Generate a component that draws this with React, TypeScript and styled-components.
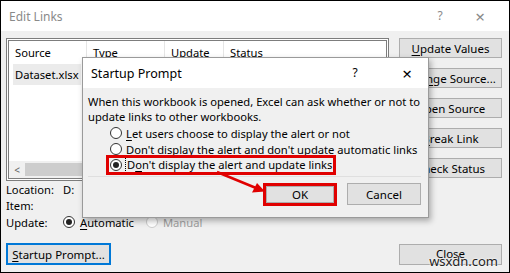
import React from "react";
import styled, { createGlobalStyle, css } from "styled-components";

const FONT = `"Noto Sans", "Open Sans", sans-serif`;

const Global = createGlobalStyle`
  html, body { margin: 0; padding: 0; background: #fff; }
  body { font-family: ${FONT}; font-size: 11.2px; color: #000; }
  * { box-sizing: border-box; }
`;

const Window = styled.div`
  position: relative;
  width: 510px;
  height: 273px;
  border: 1px solid #000;
  background: #f0f0f0;
  display: flex;
  flex-direction: column;
  overflow: hidden;
`;

const TitleBar = styled.div<{ $active?: boolean }>`
  height: 30px;
  flex: none;
  background: #fff;
  display: flex;
  align-items: center;
  padding-left: 8px;
  font-size: ${(p) => (p.$active ? 12.5 : 12)}px;
  color: ${(p) => (p.$active ? "#000" : "#8a8a8a")};
`;

const TitleText = styled.div`
  flex: 1;
`;

const Caption = styled.div<{ $w: number; $size?: number }>`
  width: ${(p) => p.$w}px;
  text-align: center;
  font-size: ${(p) => p.$size ?? 12}px;
  line-height: 1;
`;

const Body = styled.div`
  flex: 1;
  display: flex;
  gap: 10px;
  padding: 7px 7px 7px 5px;
`;

const LeftCol = styled.div`
  flex: 1;
  display: flex;
  flex-direction: column;
`;

const LinkList = styled.div`
  height: 143px;
  border: 3px double #7d7d7d;
  background: #fff;
  display: flex;
  flex-direction: column;
`;

const ListHeader = styled.div`
  display: grid;
  grid-template-columns: 78px 78px 59px 1fr;
  height: 23px;
`;

const HeaderCell = styled.div`
  border-right: 1px solid #e5e5e5;
  padding-left: 6px;
  display: flex;
  align-items: center;
  &:last-child { border-right: none; }
`;

const ListRow = styled.div`
  height: 21px;
  display: flex;
  padding-left: 4px;
`;

const SourceCell = styled.div<{ $selected?: boolean }>`
  display: flex;
  align-items: center;
  padding: 0 2px;
  background: ${(p) => (p.$selected ? "#ebebeb" : "transparent")};
`;

const ListFill = styled.div`
  flex: 1;
`;

const HScroll = styled.div`
  height: 17px;
  display: flex;
  background: #f0f0f0;
`;

const ScrollArrow = styled.div`
  width: 16px;
  display: flex;
  align-items: center;
  justify-content: center;
  color: #606060;
  font-size: 10px;
`;

const ScrollThumb = styled.div`
  width: 300px;
  margin: 2px 0;
  background: #cdcdcd;
`;

const InfoRow = styled.div`
  display: grid;
  grid-template-columns: 57px 1fr;
  height: 16.5px;
  align-items: center;
  &:first-of-type { margin-top: 2px; }
`;

const RadioGroupRow = styled.div`
  display: flex;
  align-items: center;
  gap: 12px;
`;

const RadioLabel = styled.label<{ $disabled?: boolean }>`
  display: inline-flex;
  align-items: center;
  gap: 5px;
  color: ${(p) => (p.$disabled ? "#a0a0a0" : "#000")};
`;

const RadioCircle = styled.span<{ $checked?: boolean; $disabled?: boolean }>`
  width: 12px;
  height: 12px;
  flex: none;
  border-radius: 50%;
  border: 1px solid ${(p) => (p.$disabled ? "#cccccc" : "#333")};
  background: #fff;
  display: inline-flex;
  align-items: center;
  justify-content: center;
  &::after {
    content: "";
    width: 6px;
    height: 6px;
    border-radius: 50%;
    background: ${(p) => (p.$checked ? "#222" : "transparent")};
  }
`;

const Button = styled.div<{ $focused?: boolean; $highlight?: boolean; $h?: number; $w?: number }>`
  height: ${(p) => p.$h ?? 20}px;
  ${(p) => p.$w && css`width: ${p.$w}px;`}
  background: #e1e1e1;
  border: 1px solid #adadad;
  display: flex;
  align-items: center;
  justify-content: center;
  font-size: 11.5px;
  ${(p) =>
    p.$focused &&
    css`
      border: 2px solid #0078d7;
    `}
  ${(p) =>
    p.$highlight &&
    css`
      border: 3px solid #e00000;
      box-shadow: inset 0 0 0 1px #adadad;
    `}
`;

const StartupButton = styled(Button)`
  margin-top: auto;
  width: 105px;
  height: 22px;
`;

const RightCol = styled.div`
  width: 103px;
  display: flex;
  flex-direction: column;
  gap: 10px;
`;

const CloseButton = styled(Button)`
  margin-top: auto;
  height: 21px;
  align-items: flex-start;
  padding-top: 1px;
`;

const U = styled.span`
  text-decoration: underline;
  text-underline-offset: 2px;
`;

/* Startup Prompt dialog — a window over the other window */
const Dialog = styled.div`
  position: absolute;
  left: 81px;
  top: 56px;
  width: 347px;
  height: 161px;
  background: #f0f0f0;
  border: 1px solid #9a9a9a;
  box-shadow: 2px 3px 6px rgba(0, 0, 0, 0.3);
  display: flex;
  flex-direction: column;
`;

const DialogBody = styled.div`
  flex: 1;
  display: flex;
  flex-direction: column;
  padding: 6px 6px 0 5px;
`;

const Message = styled.div`
  line-height: 15px;
`;

const RadioList = styled.div`
  display: flex;
  flex-direction: column;
  padding-left: 22px;
  margin-top: 1px;
`;

const RadioRow = styled.div<{ $highlight?: boolean }>`
  position: relative;
  height: 16px;
  display: flex;
  align-items: center;
  align-self: flex-start;
  gap: 4px;
  ${(p) =>
    p.$highlight &&
    css`
      &::after {
        content: "";
        position: absolute;
        left: -4px;
        right: -3px;
        top: -2px;
        bottom: -2px;
        border: 3px solid #e00000;
        pointer-events: none;
      }
    `}
`;

const FocusText = styled.span`
  outline: 1px dotted #000;
  line-height: 14px;
  padding: 0 1px;
`;

const Separator = styled.div`
  margin-top: 3px;
  border-top: 1px solid #dfdfdf;
  margin-right: 1px;
`;

const DialogButtons = styled.div`
  display: flex;
  justify-content: flex-end;
  gap: 10px;
  padding-top: 6px;
  padding-right: 1px;
`;

const Arrow = styled.svg`
  position: absolute;
  left: 0;
  top: 0;
  pointer-events: none;
`;

const Watermark = styled.div`
  position: absolute;
  right: 11px;
  bottom: 2px;
  font-size: 13px;
  color: #222;
  text-shadow: 0 0 2px #fff, 0 0 2px #fff;
`;

export default function App() {
  return (
    <>
      <Global />
      <Window>
        <TitleBar>
          <TitleText>Edit Links</TitleText>
          <Caption $w={22}>?</Caption>
          <Caption $w={58} $size={17}>×</Caption>
        </TitleBar>
        <Body>
          <LeftCol>
            <LinkList>
              <ListHeader>
                <HeaderCell>Source</HeaderCell>
                <HeaderCell>Type</HeaderCell>
                <HeaderCell>Update</HeaderCell>
                <HeaderCell>Status</HeaderCell>
              </ListHeader>
              <ListRow>
                <SourceCell $selected>Dataset.xlsx</SourceCell>
              </ListRow>
              <ListFill />
              <HScroll>
                <ScrollArrow>&lt;</ScrollArrow>
                <ScrollThumb />
              </HScroll>
            </LinkList>
            <InfoRow>
              <span>Location:</span>
              <span>D:</span>
            </InfoRow>
            <InfoRow>
              <span>Item:</span>
              <span />
            </InfoRow>
            <InfoRow>
              <span>Update:</span>
              <RadioGroupRow>
                <RadioLabel>
                  <RadioCircle $checked />
                  <span>
                    <U>A</U>utomatic
                  </span>
                </RadioLabel>
                <RadioLabel $disabled>
                  <RadioCircle $disabled />
                  <span>Manual</span>
                </RadioLabel>
              </RadioGroupRow>
            </InfoRow>
            <StartupButton $focused>
              <span>
                <U>S</U>tartup Prompt...
              </span>
            </StartupButton>
          </LeftCol>
          <RightCol>
            <Button>
              <span>
                <U>U</U>pdate Values
              </span>
            </Button>
            <Button>
              <span>
                Cha<U>n</U>ge Source...
              </span>
            </Button>
            <Button>
              <span>
                <U>O</U>pen Source
              </span>
            </Button>
            <Button>
              <span>
                <U>B</U>reak Link
              </span>
            </Button>
            <Button>
              <span>
                <U>C</U>heck Status
              </span>
            </Button>
            <CloseButton>Close</CloseButton>
          </RightCol>
        </Body>

        <Dialog>
          <TitleBar $active>
            <TitleText>Startup Prompt</TitleText>
            <Caption $w={62}>?</Caption>
            <Caption $w={42} $size={17}>×</Caption>
          </TitleBar>
          <DialogBody>
            <Message>
              When this workbook is opened, Excel can ask whether or not to
              <br />
              update links to other workbooks.
            </Message>
            <RadioList>
              <RadioRow>
                <RadioCircle />
                <span>
                  <U>L</U>et users choose to display the alert or not
                </span>
              </RadioRow>
              <RadioRow>
                <RadioCircle />
                <span>
                  <U>D</U>on't display the alert and don't update automatic links
                </span>
              </RadioRow>
              <RadioRow $highlight>
                <RadioCircle $checked />
                <FocusText>
                  D<U>o</U>n't display the alert and update links
                </FocusText>
              </RadioRow>
            </RadioList>
            <Separator />
            <DialogButtons>
              <Button $highlight $w={74} $h={23}>
                OK
              </Button>
              <Button $w={74} $h={22}>
                Cancel
              </Button>
            </DialogButtons>
          </DialogBody>
        </Dialog>

        <Arrow width="510" height="273" viewBox="0 0 510 273">
          <line x1="216" y1="171" x2="255" y2="187" stroke="#e00000" strokeWidth="2.5" />
          <polygon points="264,190.5 251,191.5 256,182" fill="#e00000" />
        </Arrow>
        <Watermark>wsxdn.com</Watermark>
      </Window>
    </>
  );
}
